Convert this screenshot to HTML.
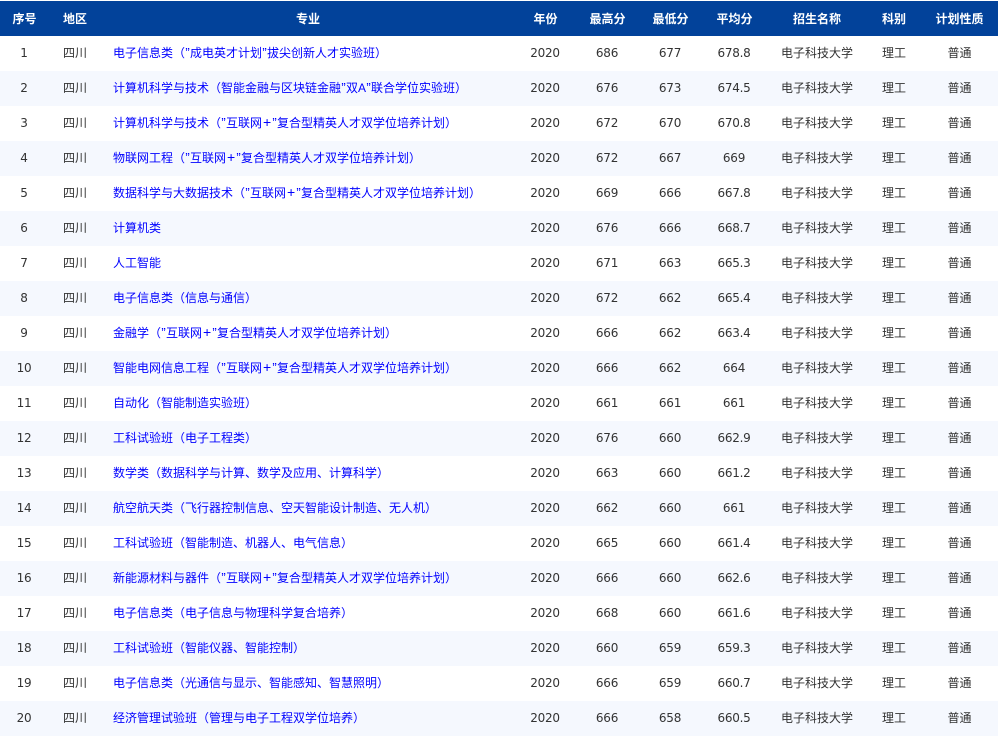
<!DOCTYPE html>
<html lang="zh"><head><meta charset="utf-8"><title>录取分数</title>
<style>
html,body{margin:0;padding:0;background:#fff;width:1000px;height:739px;overflow:hidden}
table{position:absolute;left:0;top:1px;width:998px;border-collapse:collapse;table-layout:fixed;font:12px/35px "DejaVu Sans","Noto Sans CJK SC",sans-serif;color:#333}
th,td{height:35px;padding:0;text-align:center;white-space:nowrap;overflow:hidden}
td{letter-spacing:-.25px;padding-right:1px}
th{background:#02429a;color:#fff;font-weight:bold;font-family:"Noto Sans CJK SC",sans-serif}
tr:nth-child(even) td{background:#f5f8fe}
td.m{text-align:left;padding-left:12px;padding-right:0;color:#00f;font-family:"Liberation Sans","Noto Sans CJK SC",sans-serif;letter-spacing:0;line-height:35px}
td.c{font-family:"Noto Sans CJK SC",sans-serif;letter-spacing:0;line-height:33px;height:33px;padding-bottom:2px;padding-right:0}
td.m i{display:inline-block;width:5px;font-style:normal;font-size:13px;text-align:center;line-height:12px}
td.m b{display:inline-block;width:10px;font-weight:normal;font-size:14px;text-align:center;line-height:12px}
</style></head><body>
<table>
<colgroup><col style="width:49px"><col style="width:52px"><col style="width:414px"><col style="width:61px"><col style="width:63px"><col style="width:63px"><col style="width:65px"><col style="width:100px"><col style="width:54px"><col style="width:77px"></colgroup>
<thead><tr><th>序号</th><th>地区</th><th>专业</th><th>年份</th><th>最高分</th><th>最低分</th><th>平均分</th><th>招生名称</th><th>科别</th><th>计划性质</th></tr></thead>
<tbody>
<tr><td>1</td><td class="c">四川</td><td class="m">电子信息类（<i>”</i>成电英才计划<i>”</i>拔尖创新人才实验班）</td><td>2020</td><td>686</td><td>677</td><td>678.8</td><td class="c">电子科技大学</td><td class="c">理工</td><td class="c">普通</td></tr>
<tr><td>2</td><td class="c">四川</td><td class="m">计算机科学与技术（智能金融与区块链金融<i>”</i>双A<i>”</i>联合学位实验班）</td><td>2020</td><td>676</td><td>673</td><td>674.5</td><td class="c">电子科技大学</td><td class="c">理工</td><td class="c">普通</td></tr>
<tr><td>3</td><td class="c">四川</td><td class="m">计算机科学与技术（<i>”</i>互联网<b>+</b><i>”</i>复合型精英人才双学位培养计划）</td><td>2020</td><td>672</td><td>670</td><td>670.8</td><td class="c">电子科技大学</td><td class="c">理工</td><td class="c">普通</td></tr>
<tr><td>4</td><td class="c">四川</td><td class="m">物联网工程（<i>”</i>互联网<b>+</b><i>”</i>复合型精英人才双学位培养计划）</td><td>2020</td><td>672</td><td>667</td><td>669</td><td class="c">电子科技大学</td><td class="c">理工</td><td class="c">普通</td></tr>
<tr><td>5</td><td class="c">四川</td><td class="m">数据科学与大数据技术（<i>”</i>互联网<b>+</b><i>”</i>复合型精英人才双学位培养计划）</td><td>2020</td><td>669</td><td>666</td><td>667.8</td><td class="c">电子科技大学</td><td class="c">理工</td><td class="c">普通</td></tr>
<tr><td>6</td><td class="c">四川</td><td class="m">计算机类</td><td>2020</td><td>676</td><td>666</td><td>668.7</td><td class="c">电子科技大学</td><td class="c">理工</td><td class="c">普通</td></tr>
<tr><td>7</td><td class="c">四川</td><td class="m">人工智能</td><td>2020</td><td>671</td><td>663</td><td>665.3</td><td class="c">电子科技大学</td><td class="c">理工</td><td class="c">普通</td></tr>
<tr><td>8</td><td class="c">四川</td><td class="m">电子信息类（信息与通信）</td><td>2020</td><td>672</td><td>662</td><td>665.4</td><td class="c">电子科技大学</td><td class="c">理工</td><td class="c">普通</td></tr>
<tr><td>9</td><td class="c">四川</td><td class="m">金融学（<i>”</i>互联网<b>+</b><i>”</i>复合型精英人才双学位培养计划）</td><td>2020</td><td>666</td><td>662</td><td>663.4</td><td class="c">电子科技大学</td><td class="c">理工</td><td class="c">普通</td></tr>
<tr><td>10</td><td class="c">四川</td><td class="m">智能电网信息工程（<i>”</i>互联网<b>+</b><i>”</i>复合型精英人才双学位培养计划）</td><td>2020</td><td>666</td><td>662</td><td>664</td><td class="c">电子科技大学</td><td class="c">理工</td><td class="c">普通</td></tr>
<tr><td>11</td><td class="c">四川</td><td class="m">自动化（智能制造实验班）</td><td>2020</td><td>661</td><td>661</td><td>661</td><td class="c">电子科技大学</td><td class="c">理工</td><td class="c">普通</td></tr>
<tr><td>12</td><td class="c">四川</td><td class="m">工科试验班（电子工程类）</td><td>2020</td><td>676</td><td>660</td><td>662.9</td><td class="c">电子科技大学</td><td class="c">理工</td><td class="c">普通</td></tr>
<tr><td>13</td><td class="c">四川</td><td class="m">数学类（数据科学与计算、数学及应用、计算科学）</td><td>2020</td><td>663</td><td>660</td><td>661.2</td><td class="c">电子科技大学</td><td class="c">理工</td><td class="c">普通</td></tr>
<tr><td>14</td><td class="c">四川</td><td class="m">航空航天类（飞行器控制信息、空天智能设计制造、无人机）</td><td>2020</td><td>662</td><td>660</td><td>661</td><td class="c">电子科技大学</td><td class="c">理工</td><td class="c">普通</td></tr>
<tr><td>15</td><td class="c">四川</td><td class="m">工科试验班（智能制造、机器人、电气信息）</td><td>2020</td><td>665</td><td>660</td><td>661.4</td><td class="c">电子科技大学</td><td class="c">理工</td><td class="c">普通</td></tr>
<tr><td>16</td><td class="c">四川</td><td class="m">新能源材料与器件（<i>”</i>互联网<b>+</b><i>”</i>复合型精英人才双学位培养计划）</td><td>2020</td><td>666</td><td>660</td><td>662.6</td><td class="c">电子科技大学</td><td class="c">理工</td><td class="c">普通</td></tr>
<tr><td>17</td><td class="c">四川</td><td class="m">电子信息类（电子信息与物理科学复合培养）</td><td>2020</td><td>668</td><td>660</td><td>661.6</td><td class="c">电子科技大学</td><td class="c">理工</td><td class="c">普通</td></tr>
<tr><td>18</td><td class="c">四川</td><td class="m">工科试验班（智能仪器、智能控制）</td><td>2020</td><td>660</td><td>659</td><td>659.3</td><td class="c">电子科技大学</td><td class="c">理工</td><td class="c">普通</td></tr>
<tr><td>19</td><td class="c">四川</td><td class="m">电子信息类（光通信与显示、智能感知、智慧照明）</td><td>2020</td><td>666</td><td>659</td><td>660.7</td><td class="c">电子科技大学</td><td class="c">理工</td><td class="c">普通</td></tr>
<tr><td>20</td><td class="c">四川</td><td class="m">经济管理试验班（管理与电子工程双学位培养）</td><td>2020</td><td>666</td><td>658</td><td>660.5</td><td class="c">电子科技大学</td><td class="c">理工</td><td class="c">普通</td></tr>
</tbody></table>
</body></html>
